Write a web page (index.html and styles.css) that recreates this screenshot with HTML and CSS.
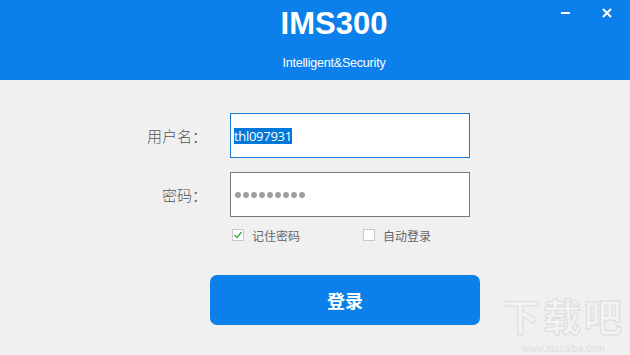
FILE: index.html
```html
<!DOCTYPE html>
<html>
<head>
<meta charset="utf-8">
<link rel="stylesheet" href="styles.css">
</head>
<body>
<div class="window">
  <header class="header">
    <div class="title">IMS300</div>
    <div class="subtitle">Intelligent&amp;Security</div>
    <div class="controls">
      <span class="ctl min"><svg width="10" height="10" viewBox="0 0 10 10"><rect x="0" y="4" width="9" height="2" fill="#fff"/></svg></span>
      <span class="ctl close"><svg width="10" height="10" viewBox="0 0 10 10"><path d="M1 1 L9 9 M9 1 L1 9" stroke="#fff" stroke-width="2"/></svg></span>
    </div>
  </header>
  <main class="form">
    <div class="row">
      <label class="label">用户名：</label>
      <div class="input active"><span class="sel">thl097931</span></div>
    </div>
    <div class="row">
      <label class="label">密码：</label>
      <div class="input"><span class="dots"><i></i><i></i><i></i><i></i><i></i><i></i><i></i><i></i><i></i></span></div>
    </div>
    <div class="checks">
      <div class="check"><span class="box"><svg width="10" height="10" viewBox="0 0 10 10"><path d="M1.5 5 L4 7.5 L8.5 2" stroke="#3aa33a" stroke-width="1.3" fill="none"/></svg></span><span>记住密码</span></div>
      <div class="check second"><span class="box"></span><span>自动登录</span></div>
    </div>
    <button class="btn">登录</button>
  </main>
  <div class="watermark"><div class="wm-big">下载吧</div><div class="wm-small">www.xiazaiba.com</div></div>
</div>
</body>
</html>
```
FILE: styles.css
```css
* { box-sizing: border-box; }
html, body { margin: 0; padding: 0; }
body { width: 630px; height: 355px; overflow: hidden; background: #f0f0f0; font-family: "Microsoft YaHei", "Noto Sans CJK SC", "Liberation Sans", sans-serif; }
.window { position: relative; width: 630px; height: 355px; }
.header { position: relative; height: 80px; background: #0b80ea; color: #fff; display: flex; flex-direction: column; align-items: center; padding-top: 6px; padding-left: 38px; }
.title { font-family: "Liberation Sans", Arial, sans-serif; font-weight: bold; font-size: 31px; line-height: 35px; }
.subtitle { font-family: "Liberation Sans", Arial, sans-serif; font-size: 12.5px; line-height: 14px; margin-top: 15px; letter-spacing: -0.2px; }
.controls { position: absolute; top: 8px; right: 18px; display: flex; gap: 31px; }
.ctl { width: 10px; height: 10px; display: flex; align-items: center; justify-content: center; }
.form { display: flex; flex-direction: column; padding-top: 33px; }
.row { display: flex; align-items: center; height: 45px; margin-bottom: 14px; }
.label { width: 207px; text-align: right; font-size: 15px; color: #555; font-weight: 300; }
.input { margin-left: 23px; width: 240px; height: 45px; background: #fff; border: 1px solid #7a7a7a; display: flex; align-items: center; padding-left: 3px; }
.input.active { border-color: #1a78d0; }
.sel { background: #0078d7; color: #fff; font-family: "Open Sans", "Liberation Sans", sans-serif; font-size: 13px; line-height: 16px; letter-spacing: -0.3px; }
.dots { display: flex; gap: 2px; padding-left: 1px; }
.dots i { width: 6px; height: 6px; border-radius: 50%; background: #9e9e9e; }
.checks { display: flex; align-items: center; height: 16px; margin-top: -4px; padding-left: 232px; font-size: 12px; color: #666; }
.check { display: flex; align-items: center; gap: 8px; }
.check.second { margin-left: 63px; }
.box { width: 12px; height: 12px; background: #fff; border: 1px solid #c8c8c8; display: flex; align-items: center; justify-content: center; }
.btn { margin: 32px 0 0 210px; width: 270px; height: 50px; border: none; border-radius: 7px; background: #0b80ea; color: #fff; font-size: 18px; font-weight: bold; font-family: "Noto Sans CJK SC", sans-serif; }
.watermark { position: absolute; right: 5px; top: 295px; text-align: center; }
.wm-big { font-size: 38px; font-weight: bold; line-height: 40px; height: 40px; color: #f3f3f3; -webkit-text-stroke: 1px #dcdcdc; font-family: "Noto Sans CJK SC", sans-serif; letter-spacing: 3px; }
.wm-small { font-size: 10px; line-height: 11px; color: #dedede; font-family: "Liberation Sans", sans-serif; margin-top: 8px; }
```
